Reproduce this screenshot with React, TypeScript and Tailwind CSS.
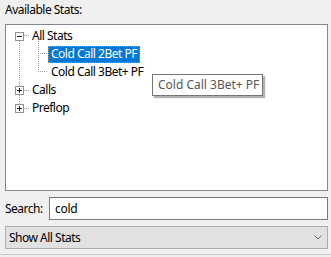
const font = { fontFamily: '"Noto Sans", "Open Sans", sans-serif' };

const ExpandBox = ({ open }: { open?: boolean }) => (
  <span className="relative flex h-[9px] w-[9px] shrink-0 items-center justify-center border border-[#919191] bg-white">
    <span className="absolute h-px w-[5px] bg-[#1c1c1c]" />
    {!open && <span className="absolute h-[5px] w-px bg-[#1c1c1c]" />}
  </span>
);

const Branch = ({ label, open }: { label: string; open?: boolean }) => (
  <li className="flex h-[18px] items-center pl-[9px]">
    <ExpandBox open={open} />
    <span className="ml-[2px] w-[6px]" />
    <span className="text-[12px] tracking-[-0.5px] text-black">{label}</span>
  </li>
);

const Leaf = ({ label, selected }: { label: string; selected?: boolean }) => (
  <li className="flex h-[18px] items-center pl-[42px]">
    <span
      className={
        selected
          ? "flex h-[17px] items-center border border-dotted border-[#e0902a] bg-[#0078d7] px-[2px] text-[12px] tracking-[-0.5px] text-white"
          : "flex h-[17px] items-center px-[3px] text-[12px] tracking-[-0.5px] text-black"
      }
    >
      {label}
    </span>
  </li>
);

export default function App() {
  return (
    <div
      className="relative flex h-[257px] w-[331px] flex-col overflow-hidden bg-[#f0f0f0] text-black"
      style={font}
    >
      <div className="pl-[5px] pt-[1px] text-[12px] leading-[18px] tracking-[-0.5px]">Available Stats:</div>

      <div className="relative ml-[5px] mt-[5px] h-[167px] w-[323px] border border-[#828790] bg-white">
        <svg className="absolute left-0 top-0" width="321" height="165">
          <g stroke="#a0a0a0" strokeDasharray="1 1" shapeRendering="crispEdges">
            <line x1="13.5" y1="14" x2="13.5" y2="79" />
            <line x1="18" y1="10.5" x2="24" y2="10.5" />
            <line x1="18" y1="65.5" x2="24" y2="65.5" />
            <line x1="18" y1="83.5" x2="24" y2="83.5" />
            <line x1="32.5" y1="16" x2="32.5" y2="47" />
            <line x1="32" y1="28.5" x2="42" y2="28.5" />
            <line x1="32" y1="46.5" x2="42" y2="46.5" />
          </g>
        </svg>
        <ul className="relative pt-[2px]">
          <Branch label="All Stats" open />
          <Leaf label="Cold Call 2Bet PF" selected />
          <Leaf label="Cold Call 3Bet+ PF" />
          <Branch label="Calls" />
          <Branch label="Preflop" />
        </ul>
      </div>

      <div className="ml-[5px] mt-[6px] flex w-[323px] items-center">
        <span className="w-[44px] text-[12px] tracking-[-0.5px]">Search:</span>
        <div className="flex h-[23px] flex-1 items-center border border-[#7a7a7a] bg-white px-[5px] text-[12px] tracking-[-0.3px]">
          cold
        </div>
      </div>

      <div className="ml-[5px] mt-[6px] flex h-[23px] w-[323px] items-center justify-between border border-[#adadad] bg-[#e1e1e1] pl-[3px] pr-[5px] text-[12px] tracking-[-0.5px]">
        <span>Show All Stats</span>
        <svg width="8" height="5" viewBox="0 0 8 5">
          <polyline points="0.5,0.5 4,4 7.5,0.5" fill="none" stroke="#606060" strokeWidth="1" />
        </svg>
      </div>

      <div className="mt-[5px] h-px w-full bg-[#c8c8c8]" />

      <div className="absolute left-[152px] top-[74px] flex h-[22px] w-[111px] items-center border border-[#767676] bg-white pl-[5px] text-[12px] text-[#575757] shadow-[2px_2px_1px_rgba(0,0,0,0.3)]">
        Cold Call 3Bet+ PF
      </div>
    </div>
  );
}
